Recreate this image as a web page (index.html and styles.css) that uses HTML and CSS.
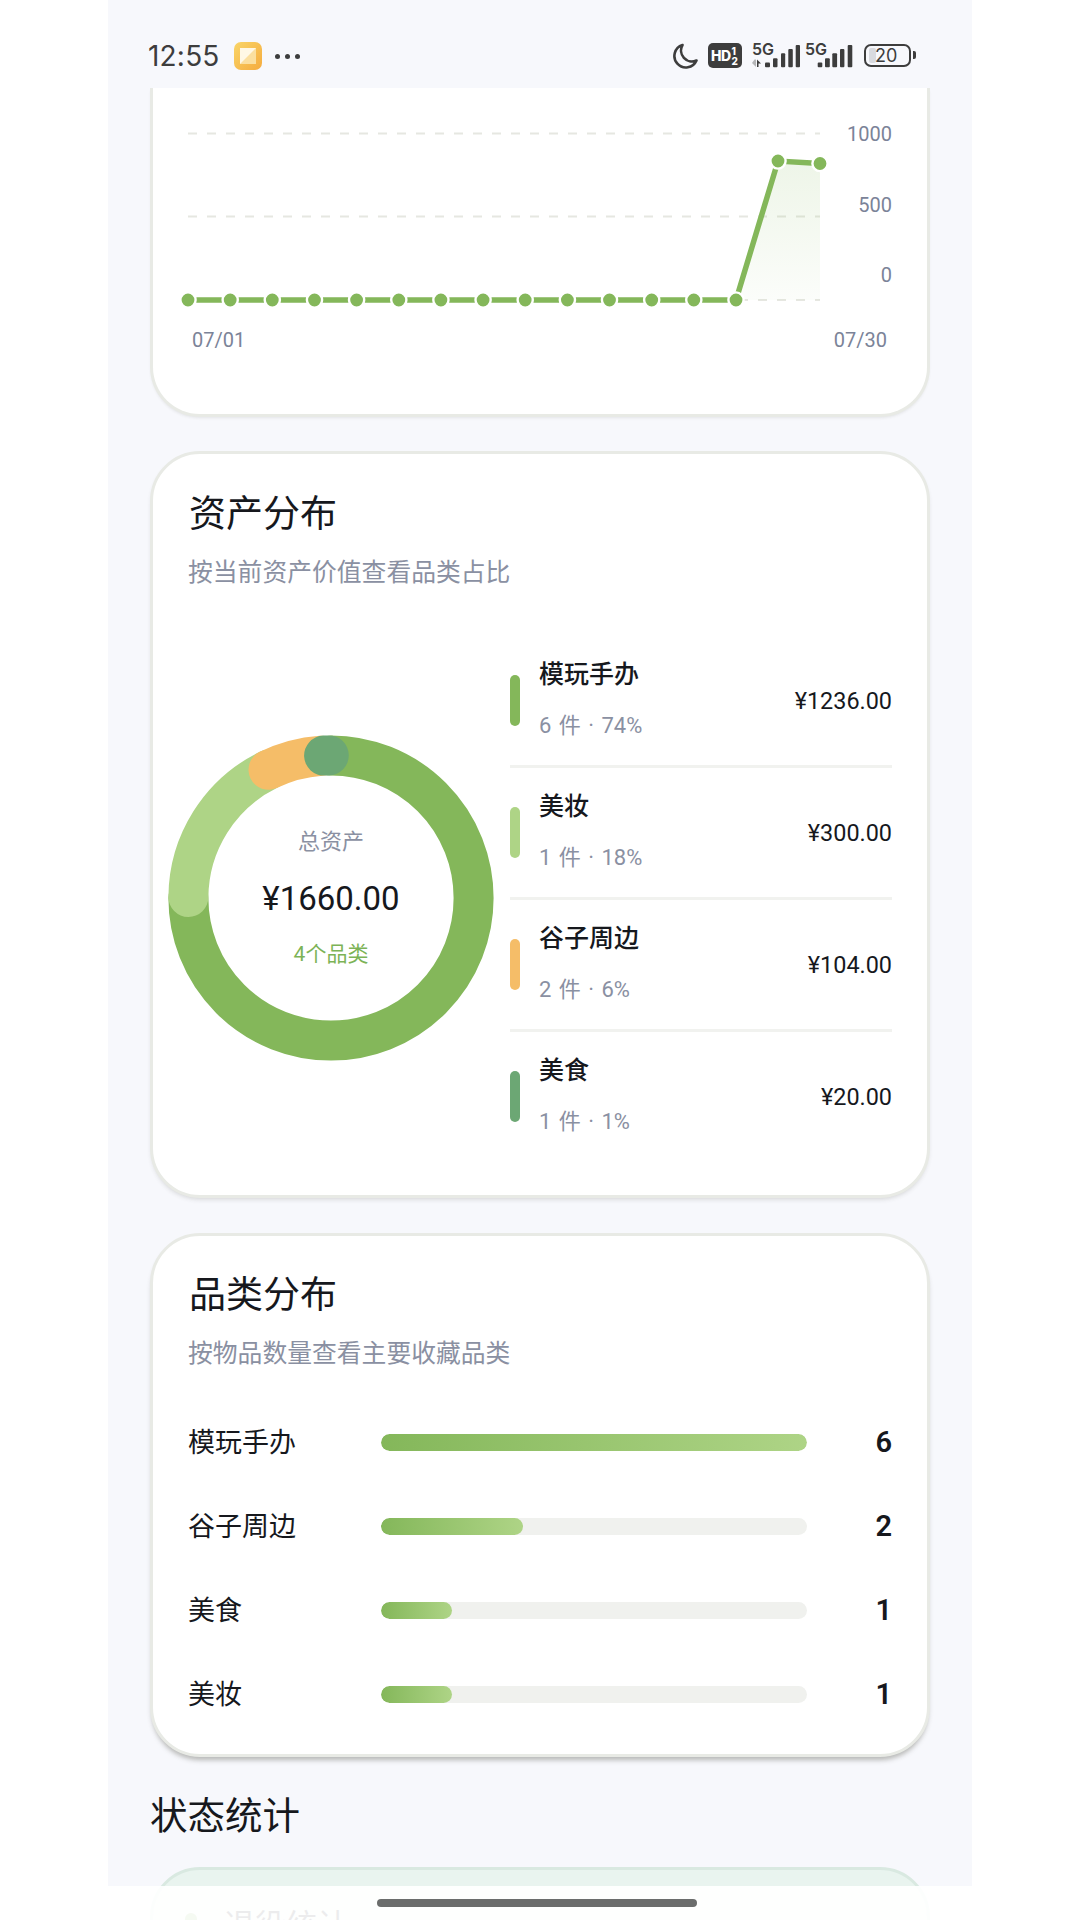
FILE: index.html
```html
<!DOCTYPE html>
<html>
<head>
<meta name="viewport" content="width=device-width, initial-scale=1">
<link rel="stylesheet" href="styles.css">
</head>
<body>

<div class="phone">

  <div class="statusbar">
    <div class="status-left">
      <span class="time">12:55</span>
      <svg class="app-icon" width="28" height="28" viewBox="0 0 28 28">
        <defs>
          <linearGradient id="appbg" x1="0" y1="0" x2="1" y2="1">
            <stop offset="0" stop-color="#f9d568"/>
            <stop offset="1" stop-color="#f5ab3e"/>
          </linearGradient>
        </defs>
        <rect width="28" height="28" rx="7" fill="url(#appbg)"/>
        <rect x="6" y="6" width="16" height="16" fill="#fbdf9f"/>
        <path d="M6 6h16L6 22z" fill="#fff8e6"/>
      </svg>
      <span class="more"><i></i><i></i><i></i></span>
    </div>
    <div class="status-right">
      <svg width="26" height="26" viewBox="0 0 26 26">
        <path d="M10.5 2A11.5 11.5 0 1 0 24.5 17.5 11 11 0 0 1 10.5 2z" fill="none" stroke="#3d3d3d" stroke-width="2.6" stroke-linejoin="round"/>
      </svg>
      <span class="hd">HD<span class="hd-frac">1<br>2</span></span>
      <svg class="signal" width="48" height="26" viewBox="0 0 48 26">
        <text x="0" y="12" class="five-g">5G</text>
        <path d="M2.5 16.5h1.5v7.5L0 20z" fill="#b5b6b8"/>
        <path d="M5 24v-7.5L9 20.5H6.500V24z" fill="#3d3d3d"/>
        <g fill="#3d3d3d">
          <rect x="13" y="19.500" width="5" height="4.800" rx="1"/>
          <rect x="21" y="15.300" width="4.500" height="9" rx="1"/>
          <rect x="29" y="10.300" width="4.200" height="14" rx="1"/>
          <rect x="36.300" y="6" width="4.500" height="18.300" rx="1"/>
          <rect x="43.700" y="2" width="4.300" height="22.300" rx="1"/>
        </g>
      </svg>
      <svg class="signal signal-two" width="48" height="26" viewBox="0 0 48 26">
        <text x="0" y="12" class="five-g">5G</text>
        <g fill="#3d3d3d">
          <rect x="12.700" y="19.500" width="4.600" height="4.800" rx="1"/>
          <rect x="20" y="15.300" width="4.800" height="9" rx="1"/>
          <rect x="27.300" y="10.300" width="4.800" height="14" rx="1"/>
          <rect x="35" y="6" width="4.400" height="18.300" rx="1"/>
          <rect x="42.700" y="2" width="4.600" height="22.300" rx="1"/>
        </g>
      </svg>
      <div class="battery">
        <div class="battery-body"><span class="battery-level"></span><span class="battery-num">20</span></div>
        <span class="battery-nub"></span>
      </div>
    </div>
  </div>

  <div class="content">

    <div class="card card-top">
      <svg class="trend" width="774" height="326" viewBox="153 88 774 326">
        <defs>
          <linearGradient id="areafill" x1="0" y1="0" x2="0" y2="1">
            <stop offset="0" stop-color="#84b75a" stop-opacity="0.14"/>
            <stop offset="1" stop-color="#84b75a" stop-opacity="0.03"/>
          </linearGradient>
        </defs>
        <g class="grid">
          <line x1="188" y1="133.5" x2="820" y2="133.5"/>
          <line x1="188" y1="216.5" x2="820" y2="216.5"/>
          <line x1="188" y1="300" x2="820" y2="300"/>
        </g>
        <path d="M736 300L778 161L820 163.5V300z" fill="url(#areafill)"/>
        <polyline class="trend-line" points="188,300 736,300 778,161 820,163.5"/>
        <g class="trend-dots">
          <circle cx="188" cy="300" r="7.6"/><circle cx="230.2" cy="300" r="7.6"/><circle cx="272.3" cy="300" r="7.6"/>
          <circle cx="314.5" cy="300" r="7.6"/><circle cx="356.6" cy="300" r="7.6"/><circle cx="398.8" cy="300" r="7.6"/>
          <circle cx="440.9" cy="300" r="7.6"/><circle cx="483.1" cy="300" r="7.6"/><circle cx="525.2" cy="300" r="7.6"/>
          <circle cx="567.4" cy="300" r="7.6"/><circle cx="609.5" cy="300" r="7.6"/><circle cx="651.7" cy="300" r="7.6"/>
          <circle cx="693.8" cy="300" r="7.6"/><circle cx="736" cy="300" r="7.6"/><circle cx="778" cy="161" r="7.6"/>
          <circle cx="820" cy="163.5" r="7.6"/>
        </g>
        <g class="axis">
          <text x="892" y="141" text-anchor="end">1000</text>
          <text x="892" y="212" text-anchor="end">500</text>
          <text x="892" y="282" text-anchor="end">0</text>
          <text x="192" y="347">07/01</text>
          <text x="887" y="347" text-anchor="end">07/30</text>
        </g>
      </svg>
    </div>

    <div class="card card-assets">
      <h2 class="card-title">资产分布</h2>
      <p class="card-sub">按当前资产价值查看品类占比</p>
      <div class="assets">
        <div class="donut">
          <svg width="326" height="326" viewBox="0 0 326 326">
            <g class="donut-rings">
              <circle cx="163" cy="163" r="142.6" pathLength="360" stroke="#84b75a" stroke-dasharray="270 360"/>
              <circle cx="163" cy="163" r="142.6" pathLength="360" stroke="#aed486" stroke-dasharray="63.6 360" stroke-dashoffset="-270.4"/>
              <circle cx="163" cy="163" r="142.6" pathLength="360" stroke="#f5bd68" stroke-dasharray="22 360" stroke-dashoffset="-334"/>
              <circle cx="163" cy="163" r="142.6" pathLength="360" stroke="#6ca774" stroke-dasharray="1.9 360" stroke-dashoffset="-357.2"/>
            </g>
          </svg>
          <div class="donut-center">
            <span class="donut-label">总资产</span>
            <span class="donut-total">¥1660.00</span>
            <span class="donut-count">4个品类</span>
          </div>
        </div>
        <ul class="legend">
          <li class="legend-row">
            <span class="legend-mark mark-green"></span>
            <div class="legend-text"><b>模玩手办</b><span>6 件 · 74%</span></div>
            <span class="legend-value">¥1236.00</span>
          </li>
          <li class="legend-row">
            <span class="legend-mark mark-light"></span>
            <div class="legend-text"><b>美妆</b><span>1 件 · 18%</span></div>
            <span class="legend-value">¥300.00</span>
          </li>
          <li class="legend-row">
            <span class="legend-mark mark-orange"></span>
            <div class="legend-text"><b>谷子周边</b><span>2 件 · 6%</span></div>
            <span class="legend-value">¥104.00</span>
          </li>
          <li class="legend-row">
            <span class="legend-mark mark-dark"></span>
            <div class="legend-text"><b>美食</b><span>1 件 · 1%</span></div>
            <span class="legend-value">¥20.00</span>
          </li>
        </ul>
      </div>
    </div>

    <div class="card card-category">
      <h2 class="card-title">品类分布</h2>
      <p class="card-sub">按物品数量查看主要收藏品类</p>
      <div class="bars">
        <div class="bar-row">
          <span class="bar-name">模玩手办</span>
          <div class="bar-track"><div class="bar-fill" style="width:100%"></div></div>
          <span class="bar-num">6</span>
        </div>
        <div class="bar-row">
          <span class="bar-name">谷子周边</span>
          <div class="bar-track"><div class="bar-fill" style="width:33.3%"></div></div>
          <span class="bar-num">2</span>
        </div>
        <div class="bar-row">
          <span class="bar-name">美食</span>
          <div class="bar-track"><div class="bar-fill" style="width:16.7%"></div></div>
          <span class="bar-num">1</span>
        </div>
        <div class="bar-row">
          <span class="bar-name">美妆</span>
          <div class="bar-track"><div class="bar-fill" style="width:16.7%"></div></div>
          <span class="bar-num">1</span>
        </div>
      </div>
    </div>

    <h2 class="section-title">状态统计</h2>

    <div class="status-card">
      <span class="status-dot"></span>
      <span class="status-name">退役统计</span>
    </div>

  </div>
</div>

<div class="navbar"><span class="home-bar"></span></div>

</body>
</html>
```

FILE: styles.css
```css
* {
  box-sizing: border-box;
}

html, body {
  margin: 0;
  height: 1920px;
  overflow: hidden;
  background-color: #fff;
}

body {
  font-family: "Roboto", "Noto Sans CJK SC", sans-serif;
  color: #16181d;
  position: relative;
}

.phone {
  width: 864px;
  height: 1920px;
  margin-left: 108px;
  background-color: #f7f8fc;
  overflow: hidden;
}

/* status bar */
.statusbar {
  height: 88px;
  padding: 42px 56px 0 40px;
  display: flex;
  justify-content: space-between;
  align-items: flex-start;
  font-family: "Inter", sans-serif;
}

.status-left {
  display: flex;
  align-items: center;
  height: 28px;
}

.time {
  font-size: 28px;
  color: #3d3d3d;
  width: 86px;
  letter-spacing: 0.2px;
}

.more {
  display: flex;
  gap: 5px;
  margin-left: 13px;
}

.more i {
  width: 5px;
  height: 5px;
  border-radius: 50%;
  background-color: #3d3d3d;
}

.status-right {
  display: flex;
  align-items: flex-start;
  height: 28px;
  padding-top: 1px;
}

.hd {
  width: 34px;
  height: 25px;
  margin-left: 10px;
  background-color: #3d3d3d;
  border-radius: 5px;
  color: #fff;
  font-size: 14px;
  font-weight: 800;
  display: flex;
  align-items: center;
  padding-left: 3px;
  letter-spacing: -0.5px;
}

.hd-frac {
  font-size: 10px;
  line-height: 10px;
  margin-left: 1px;
}

.signal {
  overflow: visible;
  margin-left: 10px;
}

.signal-two {
  margin-left: 5px;
}

.five-g {
  font-size: 16px;
  font-weight: 600;
  fill: #3d3d3d;
}

.battery {
  display: flex;
  align-items: center;
  height: 24px;
  margin-left: 11px;
}

.battery-body {
  width: 47px;
  height: 23px;
  border: 2px solid #3d3d3d;
  border-radius: 7px;
  padding-left: 3px;
  display: flex;
  align-items: center;
  position: relative;
}

.battery-level {
  width: 7px;
  height: 15px;
  background-color: #d8dadf;
  border-radius: 2px;
}

.battery-num {
  position: absolute;
  left: 9px;
  font-size: 18px;
  line-height: 19px;
  color: #3d3d3d;
}

.battery-nub {
  width: 3px;
  height: 8px;
  margin-left: 2px;
  background-color: #3d3d3d;
  border-radius: 0 2px 2px 0;
}

/* cards */
.content {
  padding: 0 42px;
}

.card {
  background-color: #fff;
  border: 3px solid #e8eae5;
  border-radius: 50px;
  margin-bottom: 35px;
  padding: 0 35px 0 36px;
}

.card-top {
  height: 329px;
  margin-bottom: 34px;
  padding: 0;
  border-top: 0;
  border-radius: 0 0 50px 50px;
  box-shadow: 0 2px 3px -1px rgba(60, 60, 50, 0.1);
}

.trend {
  display: block;
}

.grid line {
  stroke: #e6e7e1;
  stroke-width: 2;
  stroke-dasharray: 9 10;
}

.trend-line {
  fill: none;
  stroke: #84b75a;
  stroke-width: 5.5;
}

.trend-dots circle {
  fill: #84b75a;
  stroke: #fff;
  stroke-width: 2.4;
}

.axis text {
  font-size: 20px;
  fill: #7b8398;
}

.card-assets {
  height: 747px;
  padding-top: 38px;
  box-shadow: 0 3px 5px -2px rgba(60, 60, 50, 0.2);
}

.card-category {
  height: 524px;
  padding-top: 37px;
  box-shadow: 0 5px 5px -2px rgba(60, 60, 50, 0.35);
}

.card-title {
  margin: 0;
  font-size: 37px;
  line-height: 46px;
  font-weight: 400;
}

.card-sub {
  margin: 17px 0 0 -1px;
  font-size: 24.8px;
  line-height: 36px;
  color: #8a90a2;
}

/* donut + legend */
.assets {
  display: flex;
  align-items: center;
  margin: 41px 0 0 -21px;
}

.donut {
  width: 326px;
  height: 326px;
  flex: none;
  position: relative;
  margin-right: 16px;
}

.donut svg {
  display: block;
}

.donut-rings {
  transform: rotate(-90deg);
  transform-origin: 163px 163px;
}

.donut-rings circle {
  fill: none;
  stroke-width: 40;
  stroke-linecap: round;
}

.donut-center {
  position: absolute;
  top: 0;
  left: 0;
  right: 0;
  bottom: 0;
  display: flex;
  flex-direction: column;
  align-items: center;
  justify-content: center;
}

.donut-label {
  font-size: 22px;
  line-height: 28px;
  color: #8a90a2;
}

.donut-total {
  font-size: 33px;
  line-height: 44px;
  margin-top: 21px;
}

.donut-count {
  font-size: 21px;
  line-height: 28px;
  margin-top: 19px;
  color: #7cb356;
}

.legend {
  list-style-type: none;
  margin: 4px 0 0;
  padding: 0;
  width: 382px;
}

.legend-row {
  height: 132px;
  display: flex;
  align-items: center;
  border-bottom: 3px solid #f1f2ef;
}

.legend-row:last-child {
  border-bottom-color: transparent;
}

.legend-mark {
  width: 10px;
  height: 51px;
  border-radius: 5px;
  margin-right: 19px;
}

.mark-green { background-color: #84b75a; }
.mark-light { background-color: #aed486; }
.mark-orange { background-color: #f5bd68; }
.mark-dark { background-color: #6ca774; }

.legend-text {
  flex: 1;
  display: flex;
  flex-direction: column;
  gap: 20px;
  padding-bottom: 4px;
}

.legend-text b {
  font-size: 25px;
  line-height: 34px;
  font-weight: 500;
}

.legend-text span {
  font-size: 22px;
  line-height: 28px;
  color: #8a90a2;
  word-spacing: 2px;
}

.legend-value {
  font-size: 23.4px;
}

/* category bars */
.bars {
  margin: 28px 0 0 -1px;
  display: flex;
  flex-direction: column;
}

.bar-row {
  height: 84px;
  display: flex;
  align-items: center;
}

.bar-name {
  width: 193px;
  margin-top: -4px;
  font-size: 27px;
}

.bar-track {
  width: 426px;
  height: 17px;
  border-radius: 9px;
  background-color: #f0f1ee;
  overflow: hidden;
}

.bar-fill {
  height: 100%;
  border-radius: 9px;
  background: linear-gradient(90deg, #84b75a, #aed486);
}

.bar-num {
  flex: 1;
  text-align: right;
  font-size: 29px;
  font-weight: 600;
}

/* bottom of page */
.section-title {
  margin: 36px 0 0;
  font-size: 37.5px;
  line-height: 46px;
  font-weight: 400;
}

.status-card {
  height: 200px;
  margin-top: 28px;
  padding: 36px 0 0 32px;
  background-color: #e9f4ef;
  border: 3px solid #d9e9e1;
  border-radius: 50px;
  display: flex;
  align-items: flex-start;
  gap: 27px;
}

.status-dot {
  width: 12px;
  height: 12px;
  margin-top: 7px;
  border-radius: 50%;
  background-color: #84b75a;
}

.status-name {
  font-size: 31px;
  line-height: 40px;
}

.navbar {
  position: absolute;
  left: 0;
  right: 0;
  bottom: 0;
  height: 34px;
  background-color: rgba(255, 255, 255, 0.92);
}

.home-bar {
  position: absolute;
  left: 377px;
  top: 13px;
  width: 320px;
  height: 8px;
  border-radius: 4px;
  background-color: #6b6d6c;
}
```
